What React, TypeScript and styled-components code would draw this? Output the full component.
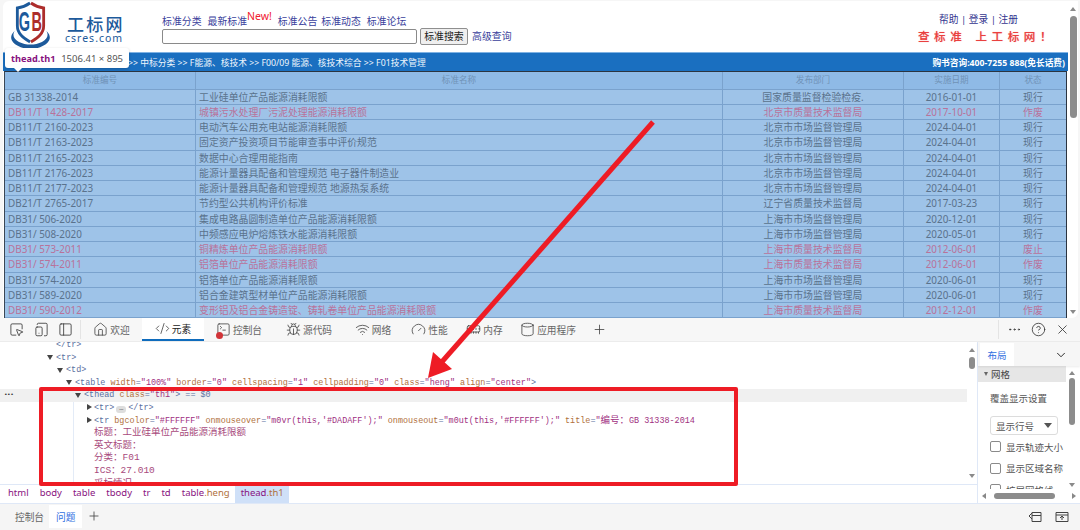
import React from "react";
import styled, { createGlobalStyle } from "styled-components";
import { Home, Bug, Wifi, Gauge, MemoryStick, Cylinder, Plus, MoreHorizontal, CircleHelp, X, ChevronDown, PanelLeft, Inspect, TabletSmartphone, SquareTerminal, CodeXml } from "lucide-react";

const Global = createGlobalStyle`
  html, body { margin: 0; padding: 0; background: #f5f5f5; overflow: hidden; }
  * { box-sizing: border-box; }
`;
const CJK = `"Noto Sans", "Noto Sans CJK SC", sans-serif`;
const MONO = `"Liberation Mono", "Noto Sans CJK SC", monospace`;

const Root = styled.div`position: relative; width: 1080px; height: 530px; display: flex; flex-direction: column; font-family: ${CJK}; overflow: hidden; background: #f6f6f6;`;
const Top = styled.div`height: 318px; display: flex; padding: 1px 2px 0 3px; flex: none;`;
const Page = styled.div`width: 1065px; height: 317px; background: #fff; overflow: hidden; border-top-left-radius: 6px;`;
const Scroll = styled.div`width: 10px; height: 317px; background: #fff; display: flex; flex-direction: column; align-items: center; border-bottom-right-radius: 6px; padding-top: 6px; padding-bottom: 4px;`;
const Up = styled.div`width: 0; height: 0; border-left: 3.5px solid transparent; border-right: 3.5px solid transparent; border-bottom: 4px solid #8a8a8a; flex: none;`;
const Down = styled(Up)`border-bottom: 0; border-top: 4px solid #8a8a8a;`;
const Thumb = styled.div<{ $h: number }>`width: 7px; height: ${p => p.$h}px; background: #8c8c8c; border-radius: 4px; margin-top: 5px; flex: none;`;
const Spring = styled.div`flex: 1;`;

const Header = styled.header`height: 51px; display: flex; padding-left: 4px; position: relative;`;
const Brand = styled.div`margin-left: 11px; width: 97px; padding-top: 13px; color: #1d5a9b; display: flex; flex-direction: column;`;
const BrandName = styled.div`font-size: 17px; line-height: 19px; font-weight: 500; letter-spacing: 2.2px; padding-left: 2px; font-family: "Noto Sans CJK SC", sans-serif;`;
const BrandUrl = styled.div`font-size: 10.5px; line-height: 11px; letter-spacing: 1px;`;
const NavCol = styled.div`display: flex; flex-direction: column; padding-top: 11px;`;
const NavRow = styled.nav`display: flex; height: 16px; align-items: flex-end; font-size: 9.9px; color: #3a3f9c; line-height: 14px;`;
const NavLink = styled.a<{ $gap: number }>`margin-right: ${p => p.$gap}px; white-space: nowrap;`;
const NewTag = styled.span`color: #f02030; font-size: 10.5px; align-self: flex-start; margin-right: 6px; margin-top: -2px; line-height: 12px;`;
const SearchRow = styled.div`display: flex; align-items: center; height: 18px; margin-top: -1px;`;
const SearchBox = styled.div`width: 255px; height: 15px; border: 1px solid #8a8a8a; border-radius: 2px; background: #fff;`;
const SearchBtn = styled.button`width: 48px; height: 17px; margin-left: 3px; padding: 0; border: 1px solid #8f8f8f; border-radius: 2px; background: #efefef; font: 9.9px ${CJK}; color: #222;`;
const Adv = styled.a`margin-left: 4px; font-size: 9.9px; color: #3a3f9c;`;
const RightCol = styled.div`margin-left: auto; width: 150px; padding-top: 12px; text-align: right; padding-right: 15px;`;
const Account = styled.div`font-size: 9.7px; color: #33358f; line-height: 13px; padding-right: 35px; white-space: nowrap;`;
const Slogan = styled.div`font-size: 11.5px; font-weight: 500; color: #e9403f; letter-spacing: 4.6px; word-spacing: 2px; line-height: 16px; margin-top: 2px; white-space: nowrap; text-shadow: 0 0 1px #f5a0a0; font-family: "Noto Sans CJK SC", sans-serif;`;

const Crumbs = styled.div`height: 19px; background: #1a6fc0; border-top: 1px solid #7fb2e3; display: flex; align-items: center; justify-content: space-between; color: #eef5fc; font-size: 8.75px; padding: 0 3px 0 125px; white-space: pre;`;
const Phone = styled.span`font-weight: 700; font-size: 8.7px; color: #fff;`;

const Grid = styled.div`margin-left: 1px; width: 1063px; border-top: 1.5px solid #2b3440; border-left: 1.5px solid #3a4654; border-right: 1.5px solid #2b3440; background: #9ec3e8;`;
const Row = styled.div<{ $head?: boolean; $red?: boolean }>`
  display: grid; grid-template-columns: 191px 527px 181px 96px 1fr;
  height: ${p => (p.$head ? 17.5 : 15.25)}px;
  background: ${p => (p.$head ? "#8fbae6" : "#9ec3e8")};
  border-bottom: 1px solid #7aa2cd;
  color: ${p => (p.$head ? "#6f92b6" : p.$red ? "#b9729a" : "#5a728c")};
  font-size: ${p => (p.$head ? "8.6px" : "9.9px")};
  line-height: ${p => (p.$head ? 16 : 14.3)}px;
`;
const Cell = styled.div<{ $center?: boolean }>`border-right: 1px solid #7aa2cd; padding-left: ${p => (p.$center ? 0 : 3)}px; text-align: ${p => (p.$center ? "center" : "left")}; white-space: nowrap; overflow: hidden;
  &:last-child { border-right: 0; }`;

const Tooltip = styled.div`position: absolute; left: 5px; top: 48px; width: 124px; height: 20px; background: #fff; border-radius: 3px; display: flex; align-items: center; justify-content: space-between; padding: 0 6px; font-size: 9.5px; color: #555; box-shadow: 0 1px 3px rgba(0,0,0,.2);
  &::after { content: ""; position: absolute; left: 9px; bottom: -4px; border-left: 4px solid transparent; border-right: 4px solid transparent; border-top: 4px solid #fff; }`;
const TipName = styled.b`color: #881280; font-size: 9.2px;`;

const Toolbar = styled.div`height: 24px; background: #f7f7f7; display: flex; align-items: stretch; color: #333; flex: none; border-bottom: 1px solid #ececec;`;
const ToolGroup = styled.div`width: 81px; display: flex; align-items: center; justify-content: space-between; padding: 0 7px 0 9px; border-right: 1px solid #e4e4e4; margin: 2px 0;`;
const Tab = styled.div<{ $w: number; $active?: boolean }>`width: ${p => p.$w}px; flex: none; display: flex; align-items: center; gap: 2px; justify-content: center; font-size: 9.7px; color: ${p => (p.$active ? "#222" : "#666")}; background: ${p => (p.$active ? "#fff" : "transparent")}; border-bottom: ${p => (p.$active ? "2px solid #0f6cbd" : "0")}; position: relative;
  svg { color: #444; flex: none; }`;
const Badge = styled.span`position: absolute; left: 12px; top: 14px; width: 7px; height: 7px; border-radius: 50%; background: #d13438;`;
const ToolRight = styled.div`margin-left: auto; width: 82px; display: flex; align-items: center; justify-content: space-between; padding: 0 10px 0 8px; border-left: 1px solid #e4e4e4; margin-top: 2px; margin-bottom: 2px;`;

const Body = styled.div`height: 161px; display: flex; background: #fff; flex: none;`;
const ElementsCol = styled.div`width: 978px; display: flex; flex-direction: column; border-right: 1px solid #dfe8f7; flex: none;`;
const DomArea = styled.div`height: 142px; display: flex; flex: none;`;
const Dom = styled.div`width: 968px; overflow: hidden; font-family: ${MONO}; font-size: 8.45px; line-height: 12.6px; color: #5a6fa0;`;
const DomInner = styled.div`margin-top: -3px;`;
const Line = styled.div<{ $x: number; $sel?: boolean }>`height: 12.6px; padding-left: ${p => p.$x}px; white-space: nowrap; position: relative; background: ${p => (p.$sel ? "#f0f0f0" : "transparent")};`;
const Tri = styled.i<{ $open?: boolean }>`position: absolute; margin-left: -9px; top: 3.5px; width: 0; height: 0; border-style: solid; border-color: transparent; ${p => p.$open ? "border-width: 5px 3.5px 0; border-top-color: #444;" : "border-width: 3.5px 0 3.5px 5px; border-left-color: #444; margin-left: -7px; top: 2.5px;"}`;
const Attr = styled.span`color: #b0703c;`;
const Val = styled.span`color: #a0307f;`;
const Cn = styled.span`font-size: 9.5px;`;
const TextVal = styled.span`color: #a84a7c; font-size: 9.5px;`;
const Ell = styled.span`display: inline-block; width: 10px; height: 7px; margin: 0 2px; background: #ddd; border-radius: 3px; font-size: 7px; line-height: 5px; text-align: center; color: #333;`;
const Dots = styled.span`position: absolute; left: 4px; top: 0; color: #333; font-weight: 700; font-size: 6px; letter-spacing: -0.5px;`;
const Nested = styled.div`margin-left: 73px; border-left: 1px solid #e3ebf7;`;
const DomScroll = styled.div`width: 10px; display: flex; flex-direction: column; align-items: center; padding: 6px 0 6px;`;
const SmallThumb = styled.div`width: 6px; height: 12px; background: #8c8c8c; border-radius: 3px; margin-top: 5px;`;
const Path = styled.div`flex: 1; display: flex; align-items: stretch; border-top: 1px solid #dfe8f7; font-size: 9.5px; color: #881280; padding-left: 2.5px;`;
const PathItem = styled.span<{ $on?: boolean }>`padding: 0 5.5px; line-height: 16px; background: ${p => (p.$on ? "#cfe0f8" : "transparent")};`;
const PathClass = styled.span`color: #b0703c;`;

const Side = styled.aside`flex: 1; display: flex; flex-direction: column; min-width: 0;`;
const SideTabs = styled.div`height: 24px; display: flex; align-items: stretch; justify-content: space-between; padding: 1px 12px 0 2px; background: #f6f6f6; box-shadow: 0 1px 2px rgba(0,0,0,.08); position: relative;
  svg { align-self: center; }`;
const SideTab = styled.div`width: 34px; background: #fff; color: #2f6fdf; font-size: 9.5px; display: flex; align-items: center; justify-content: center;`;
const SideMain = styled.div`flex: 1; display: flex; min-height: 0;`;
const SideContent = styled.div`width: 88px; overflow: hidden; font-size: 9.5px; color: #555;`;
const SectionHead = styled.div`height: 16px; background: #e6e6e6; display: flex; align-items: center; gap: 3px; padding-left: 6px; color: #444;
  &::before { content: ""; border-style: solid; border-width: 4px 2.5px 0; border-color: #666 transparent transparent; }`;
const Label = styled.div`margin: 10px 0 0 12px; line-height: 14px;`;
const Select = styled.div`margin: 10px 0 0 12px; width: 68px; height: 19px; border: 1px solid #dcdcdc; border-radius: 3px; display: flex; align-items: center; justify-content: space-between; padding: 0 5px; color: #555;
  &::after { content: ""; border-style: solid; border-width: 5px 4px 0; border-color: #555 transparent transparent; }`;
const Check = styled.label`display: flex; align-items: center; gap: 5px; margin: 0 0 0 12px; height: 21.5px; white-space: nowrap;
  &::before { content: ""; flex: none; width: 9px; height: 9px; border: 1px solid #8a8a8a; border-radius: 2px; background: #fff; }`;
const Checks = styled.div`margin-top: 1px; height: 60px; overflow: hidden;`;
const SideScroll = styled.div`width: 12px; display: flex; flex-direction: column; align-items: center; padding: 5px 0 2px;`;
const TallThumb = styled.div`width: 6px; height: 47px; background: #8c8c8c; border-radius: 3px; margin-top: 3px;`;
const HScroll = styled.div`height: 14px; display: flex; align-items: center; padding: 0 4px; gap: 4px; background: #fff;`;
const HThumb = styled.div`width: 61px; height: 6px; margin-left: 4px; background: #8c8c8c; border-radius: 3px;`;
const Left = styled.div`width: 0; height: 0; border-top: 3.5px solid transparent; border-bottom: 3.5px solid transparent; border-right: 4px solid #888;`;
const RightTri = styled(Left)`border-right: 0; border-left: 4px solid #888;`;

const Drawer = styled.div`flex: 1; background: #f5f5f5; border-top: 1px solid #dfe8f7; display: flex; align-items: flex-start; font-size: 9.7px; color: #666; padding-left: 10px;`;
const DrawerTab = styled.div<{ $on?: boolean }>`height: 23px; padding: 0 ${p => (p.$on ? 7 : 5)}px; margin-top: 1px; display: flex; align-items: center; background: ${p => (p.$on ? "#fff" : "transparent")}; color: ${p => (p.$on ? "#2f6fdf" : "#666")};`;
const DrawerPlus = styled.div`height: 24px; margin-left: 5px; display: flex; align-items: center; color: #444;`;
const DrawerIcons = styled.div`margin-left: auto; height: 26px; padding-right: 11px; display: flex; align-items: center; gap: 13px; color: #444;`;

const RedBox = styled.div`position: absolute; left: 39px; top: 387px; width: 699px; height: 99px; border: 4px solid #ee1c25; border-radius: 2px; pointer-events: none;`;
const ArrowSvg = styled.svg`position: absolute; left: 0; top: 0; pointer-events: none;`;

type R = [string, string, string, string, string, boolean?];
const SZ = "上海市市场监督管理局", SQ = "上海市质量技术监督局", BS = "北京市市场监督管理局";
const rows: R[] = [
  ["GB 31338-2014", "工业硅单位产品能源消耗限额", "国家质量监督检验检疫.", "2016-01-01", "现行"],
  ["DB11/T 1428-2017", "城镇污水处理厂污泥处理能源消耗限额", "北京市质量技术监督局", "2017-10-01", "作废", true],
  ["DB11/T 2160-2023", "电动汽车公用充电站能源消耗限额", BS, "2024-04-01", "现行"],
  ["DB11/T 2163-2023", "固定资产投资项目节能审查事中评价规范", BS, "2024-04-01", "现行"],
  ["DB11/T 2165-2023", "数据中心合理用能指南", BS, "2024-04-01", "现行"],
  ["DB11/T 2176-2023", "能源计量器具配备和管理规范 电子器件制造业", BS, "2024-04-01", "现行"],
  ["DB11/T 2177-2023", "能源计量器具配备和管理规范 地源热泵系统", BS, "2024-04-01", "现行"],
  ["DB21/T 2765-2017", "节约型公共机构评价标准", "辽宁省质量技术监督局", "2017-03-23", "现行"],
  ["DB31/ 506-2020", "集成电路晶圆制造单位产品能源消耗限额", SZ, "2020-12-01", "现行"],
  ["DB31/ 508-2020", "中频感应电炉熔炼铁水能源消耗限额", SZ, "2020-05-01", "现行"],
  ["DB31/ 573-2011", "铜精炼单位产品能源消耗限额", SQ, "2012-06-01", "废止", true],
  ["DB31/ 574-2011", "铝箔单位产品能源消耗限额", SQ, "2012-06-01", "作废", true],
  ["DB31/ 574-2020", "铝箔单位产品能源消耗限额", SZ, "2020-06-01", "现行"],
  ["DB31/ 589-2020", "铝合金建筑型材单位产品能源消耗限额", SZ, "2020-06-01", "现行"],
  ["DB31/ 590-2012", "变形铝及铝合金铸造锭、铸轧卷单位产品能源消耗限额", SQ, "2012-12-01", "作废", true],
];

const Logo = () => (
  <svg width="47" height="49" viewBox="0 0 50 49" preserveAspectRatio="none">
    <path d="M8 30 C-3 40 14 48 25 48 C36 48 53 40 42 30 C47 38 35 43.5 25 43.5 C15 43.5 3 38 8 30 Z" fill="#1d5a9b" />
    <path d="M24.5 2 C20 5 15 6.5 11 7 L11 25 C11 33 18 37 24.5 41" fill="none" stroke="#1d5a9b" strokeWidth="3" />
    <path d="M25.5 2 C30 5 35 6.5 39 7 L39 25 C39 33 32 37 25.5 41" fill="none" stroke="#ad2d2b" strokeWidth="3" />
    <text transform="translate(12.5 30) scale(0.7 1.25)" fontFamily="Liberation Sans, sans-serif" fontWeight="700" fontSize="22" fill="#1d5a9b">G</text>
    <text transform="translate(26 30) scale(0.7 1.25)" fontFamily="Liberation Sans, sans-serif" fontWeight="700" fontSize="22" fill="#ad2d2b">B</text>
  </svg>
);

const Ic = { size: 15, strokeWidth: 1.3 };

export default function App() {
  return (
    <Root>
      <Global />
      <Top>
        <Page>
          <Header>
            <Logo />
            <Brand>
              <BrandName>工标网</BrandName>
              <BrandUrl>csres.com</BrandUrl>
            </Brand>
            <NavCol>
              <NavRow>
                <NavLink $gap={6}>标准分类</NavLink>
                <NavLink $gap={0}>最新标准</NavLink>
                <NewTag>New!</NewTag>
                <NavLink $gap={4}>标准公告</NavLink>
                <NavLink $gap={6}>标准动态</NavLink>
                <NavLink $gap={0}>标准论坛</NavLink>
              </NavRow>
              <SearchRow>
                <SearchBox />
                <SearchBtn>标准搜索</SearchBtn>
                <Adv>高级查询</Adv>
              </SearchRow>
            </NavCol>
            <RightCol>
              <Account>帮助 | 登录 | 注册</Account>
              <Slogan>查标准 上工标网！</Slogan>
            </RightCol>
          </Header>
          <Crumbs>
            <span>{">> 中标分类 >> F能源、核技术 >> F00/09 能源、核技术综合 >> F01技术管理"}</span>
            <Phone>购书咨询:400-7255 888(免长话费)</Phone>
          </Crumbs>
          <Grid>
            <Row $head>
              <Cell $center>标准编号</Cell><Cell $center>标准名称</Cell><Cell $center>发布部门</Cell><Cell $center>实施日期</Cell><Cell $center>状态</Cell>
            </Row>
            {rows.map(r => (
              <Row key={r[0]} $red={r[5]}>
                <Cell>{r[0]}</Cell><Cell>{r[1]}</Cell><Cell $center>{r[2]}</Cell><Cell $center>{r[3]}</Cell><Cell $center>{r[4]}</Cell>
              </Row>
            ))}
          </Grid>
        </Page>
        <Scroll>
          <Up /><Thumb $h={102} /><Spring /><Down />
        </Scroll>
      </Top>
      <Tooltip><TipName>thead.th1</TipName><span>1506.41 × 895</span></Tooltip>

      <Toolbar>
        <ToolGroup>
          <Inspect {...Ic} /><TabletSmartphone {...Ic} /><PanelLeft {...Ic} />
        </ToolGroup>
        <Tab $w={61}><Home {...Ic} />欢迎</Tab>
        <Tab $w={62} $active><CodeXml {...Ic} />元素</Tab>
        <Tab $w={70}><SquareTerminal {...Ic} /><Badge />控制台</Tab>
        <Tab $w={70}><Bug {...Ic} />源代码</Tab>
        <Tab $w={58}><Wifi {...Ic} />网络</Tab>
        <Tab $w={55}><Gauge {...Ic} />性能</Tab>
        <Tab $w={55}><MemoryStick {...Ic} />内存</Tab>
        <Tab $w={72}><Cylinder {...Ic} />应用程序</Tab>
        <Tab $w={30}><Plus {...Ic} /></Tab>
        <ToolRight>
          <MoreHorizontal {...Ic} /><CircleHelp {...Ic} /><X {...Ic} />
        </ToolRight>
      </Toolbar>

      <Body>
        <ElementsCol>
          <DomArea>
            <Dom>
              <DomInner>
                <Line $x={56}>{"</tr>"}</Line>
                <Line $x={56}><Tri $open />{"<tr>"}</Line>
                <Line $x={66}><Tri $open />{"<td>"}</Line>
                <Line $x={75}><Tri $open />{"<table "}<Attr>width</Attr>=<Val>"100%"</Val> <Attr>border</Attr>=<Val>"0"</Val> <Attr>cellspacing</Attr>=<Val>"1"</Val> <Attr>cellpadding</Attr>=<Val>"0"</Val> <Attr>class</Attr>=<Val>"heng"</Val> <Attr>align</Attr>=<Val>"center"</Val>{">"}</Line>
                <Line $x={84} $sel><Dots>•••</Dots><Tri $open />{"<thead "}<Attr>class</Attr>=<Val>"th1"</Val>{">"} == $0</Line>
                <Nested>
                  <Line $x={20}><Tri />{"<tr>"}<Ell>…</Ell>{"</tr>"}</Line>
                  <Line $x={20}><Tri />{"<tr "}<Attr>bgcolor</Attr>=<Val>"#FFFFFF"</Val> <Attr>onmouseover</Attr>=<Val>"m0vr(this,'#DADAFF');"</Val> <Attr>onmouseout</Attr>=<Val>"m0ut(this,'#FFFFFF');"</Val> <Attr>title</Attr>=<Val>"<Cn>编号：</Cn>GB 31338-2014</Val></Line>
                  <Line $x={20}><TextVal>标题：工业硅单位产品能源消耗限额</TextVal></Line>
                  <Line $x={20}><TextVal>英文标题：</TextVal></Line>
                  <Line $x={20}><TextVal>分类：F01</TextVal></Line>
                  <Line $x={20}><TextVal>ICS：27.010</TextVal></Line>
                  <Line $x={20}><TextVal>采标情况</TextVal></Line>
                </Nested>
              </DomInner>
            </Dom>
            <DomScroll>
              <Up /><SmallThumb /><Spring /><Down />
            </DomScroll>
          </DomArea>
          <Path>
            <PathItem>html</PathItem><PathItem>body</PathItem><PathItem>table</PathItem><PathItem>tbody</PathItem><PathItem>tr</PathItem><PathItem>td</PathItem>
            <PathItem>table<PathClass>.heng</PathClass></PathItem>
            <PathItem $on>thead<PathClass>.th1</PathClass></PathItem>
          </Path>
        </ElementsCol>
        <Side>
          <SideTabs><SideTab>布局</SideTab><ChevronDown size={14} strokeWidth={1.4} /></SideTabs>
          <SideMain>
            <SideContent>
              <SectionHead>网格</SectionHead>
              <Label>覆盖显示设置</Label>
              <Select>显示行号</Select>
              <Checks>
                <Check>显示轨迹大小</Check>
                <Check>显示区域名称</Check>
                <Check>扩展网格线</Check>
              </Checks>
            </SideContent>
            <SideScroll><Up /><TallThumb /><Spring /><Down /></SideScroll>
          </SideMain>
          <HScroll><Left /><HThumb /><Spring /><RightTri /></HScroll>
        </Side>
      </Body>

      <Drawer>
        <DrawerTab>控制台</DrawerTab>
        <DrawerTab $on>问题</DrawerTab>
        <DrawerPlus><Plus size={14} strokeWidth={1.4} /></DrawerPlus>
        <DrawerIcons>
          <svg width="14" height="12" viewBox="0 0 14 12" fill="none" stroke="#444"><path d="M4 1.5h9v9H4zM4 4.5h9M4 2L1 5l3 3" /></svg>
          <svg width="14" height="12" viewBox="0 0 14 12" fill="none" stroke="#444"><path d="M1 1.5h12v9H1zM1 4h12M7 9V5.5M5 7l2-2 2 2" /></svg>
        </DrawerIcons>
      </Drawer>

      <RedBox />
      <ArrowSvg width="1080" height="530" viewBox="0 0 1080 530">
        <line x1="653" y1="122" x2="440" y2="364" stroke="#ee1c25" strokeWidth="5" />
        <path d="M428 378 L433 352 L452 369 Z" fill="#ee1c25" />
      </ArrowSvg>
    </Root>
  );
}
